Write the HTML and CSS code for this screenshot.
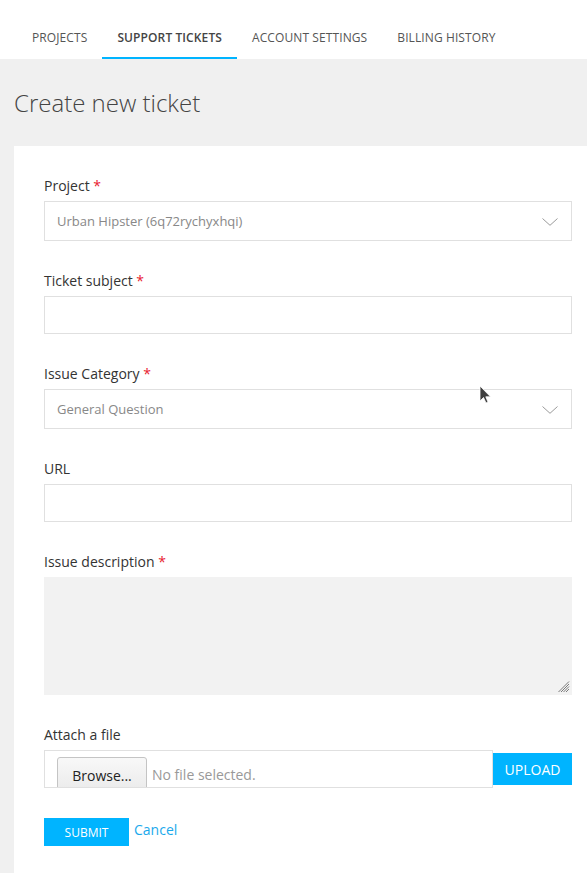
FILE: index.html
```
<!DOCTYPE html>
<html>
<head>
<meta charset="utf-8">
<link rel="stylesheet" href="styles.css">
</head>
<body>
<nav class="tabs">
  <a class="tab">Projects</a>
  <a class="tab active">Support Tickets</a>
  <a class="tab">Account Settings</a>
  <a class="tab">Billing History</a>
</nav>
<main class="content">
  <h1 class="title">Create new ticket</h1>
  <section class="card">
    <div class="group">
      <label class="label">Project <span class="req">*</span></label>
      <div class="select">
        <span class="select-value">Urban Hipster (6q72rychyxhqi)</span>
        <svg class="chev" width="16" height="8" viewBox="0 0 16 8"><path d="M0.5 0.5 L8 7.3 L15.5 0.5" fill="none" stroke="#9a9a9a" stroke-width="1"/></svg>
      </div>
    </div>
    <div class="group">
      <label class="label">Ticket subject <span class="req">*</span></label>
      <input class="input" type="text">
    </div>
    <div class="group">
      <label class="label">Issue Category <span class="req">*</span></label>
      <div class="select">
        <span class="select-value">General Question</span>
        <svg class="chev" width="16" height="8" viewBox="0 0 16 8"><path d="M0.5 0.5 L8 7.3 L15.5 0.5" fill="none" stroke="#9a9a9a" stroke-width="1"/></svg>
      </div>
    </div>
    <div class="group">
      <label class="label">URL</label>
      <input class="input" type="text">
    </div>
    <div class="group">
      <label class="label">Issue description <span class="req">*</span></label>
      <div class="textarea-wrap">
        <textarea class="textarea"></textarea>
        <svg class="grip" width="12" height="12" viewBox="0 0 12 12"><path d="M11 3 L3 11 M11 5.5 L5.5 11 M11 8 L8 11 M11 0.5 L0.5 11" stroke="#7a7a7a" stroke-width="1" fill="none"/></svg>
      </div>
    </div>
    <div class="group">
      <label class="label">Attach a file</label>
      <div class="file-row">
        <div class="file-box">
          <span class="browse">Browse...</span>
          <span class="nofile">No file selected.</span>
        </div>
        <button class="upload">UPLOAD</button>
      </div>
    </div>
    <div class="actions">
      <button class="submit">Submit</button>
      <a class="cancel">Cancel</a>
    </div>
  </section>
</main>
<svg class="cursor" width="14" height="22" viewBox="0 0 14 22"><path d="M1 1 L1 16 L4.5 12.5 L7 18 L9 17 L6.8 11.8 L11.5 11.8 Z" fill="#3f3f3f" stroke="#ffffff" stroke-width="0.8" stroke-linejoin="round"/></svg>
</body>
</html>
```
FILE: styles.css
```
* { box-sizing: border-box; }
html, body { margin: 0; padding: 0; }
body {
  background: #f0f0f0;
  font-family: "Open Sans", "Liberation Sans", sans-serif;
  color: #333;
  width: 587px;
  height: 873px;
  overflow: hidden;
  position: relative;
}
.tabs {
  background: #fff;
  height: 59px;
  display: flex;
  padding-left: 17px;
}
.tab {
  display: block;
  padding: 29px 15px 10px;
  line-height: 18px;
  font-size: 12px;
  text-transform: uppercase;
  color: #555;
  border-bottom: 2px solid transparent;
  letter-spacing: 0.1px;
}
.tab.active {
  font-weight: 600;
  color: #444;
  border-bottom-color: #00b4ff;
  letter-spacing: 0.1px;
}
.content { padding-left: 14px; }
.title {
  margin: 0;
  padding-top: 27px;
  height: 87px;
  font-size: 24px;
  line-height: 34px;
  font-weight: 300;
  color: #444;
}
.card {
  background: #fff;
  padding: 30px 15px 30px 30px;
  height: 727px;
}
.group { margin-bottom: 30px; }
.label {
  display: block;
  font-size: 14px;
  line-height: 20px;
  margin-bottom: 5px;
  color: #333;
}
.req { color: #e8202e; }
.select {
  position: relative;
  height: 40px;
  border: 1px solid #e0e0e0;
  display: flex;
  align-items: center;
  padding-left: 12px;
}
.select-value { font-size: 13px; color: #888; }
.chev { position: absolute; right: 13px; top: 16px; }
.input {
  display: block;
  width: 100%;
  height: 38px;
  border: 1px solid #e0e0e0;
  margin: 0;
  outline: none;
  background: #fff;
}
.textarea-wrap { position: relative; }
.textarea {
  display: block;
  width: 100%;
  height: 118px;
  border: none;
  background: #f2f2f2;
  margin: 0;
  resize: none;
  outline: none;
}
.grip { position: absolute; right: 2px; bottom: 2px; }
.file-row { display: flex; align-items: flex-start; }
.file-box {
  width: 449px;
  height: 38px;
  border: 1px solid #e0e0e0;
  overflow: hidden;
  display: flex;
  align-items: flex-start;
  padding: 6px 0 0 12px;
}
.browse {
  display: block;
  width: 90px;
  height: 40px;
  border: 1px solid #c4c4c4;
  border-radius: 3px;
  background: linear-gradient(#f8f8f8, #e9e9e9);
  font-size: 14px;
  line-height: 36px;
  text-align: center;
  color: #222;
}
.nofile {
  font-size: 14px;
  color: #999;
  line-height: 36px;
  margin-left: 5px;
}
.upload {
  margin: 3px 0 0 0;
  width: 79px;
  height: 32px;
  border: none;
  background: #00b4ff;
  color: #fff;
  font-family: inherit;
  font-size: 14px;
  padding: 0;
}
.actions { display: flex; align-items: flex-start; }
.submit {
  width: 85px;
  height: 28px;
  border: none;
  background: #00b4ff;
  color: #fff;
  font-family: inherit;
  font-size: 12px;
  text-transform: uppercase;
  padding: 0;
  margin: 0;
}
.cancel {
  font-size: 14px;
  color: #1aa9ec;
  margin-left: 5px;
  line-height: 24px;
}
.cursor { position: absolute; left: 479px; top: 385px; }
```
